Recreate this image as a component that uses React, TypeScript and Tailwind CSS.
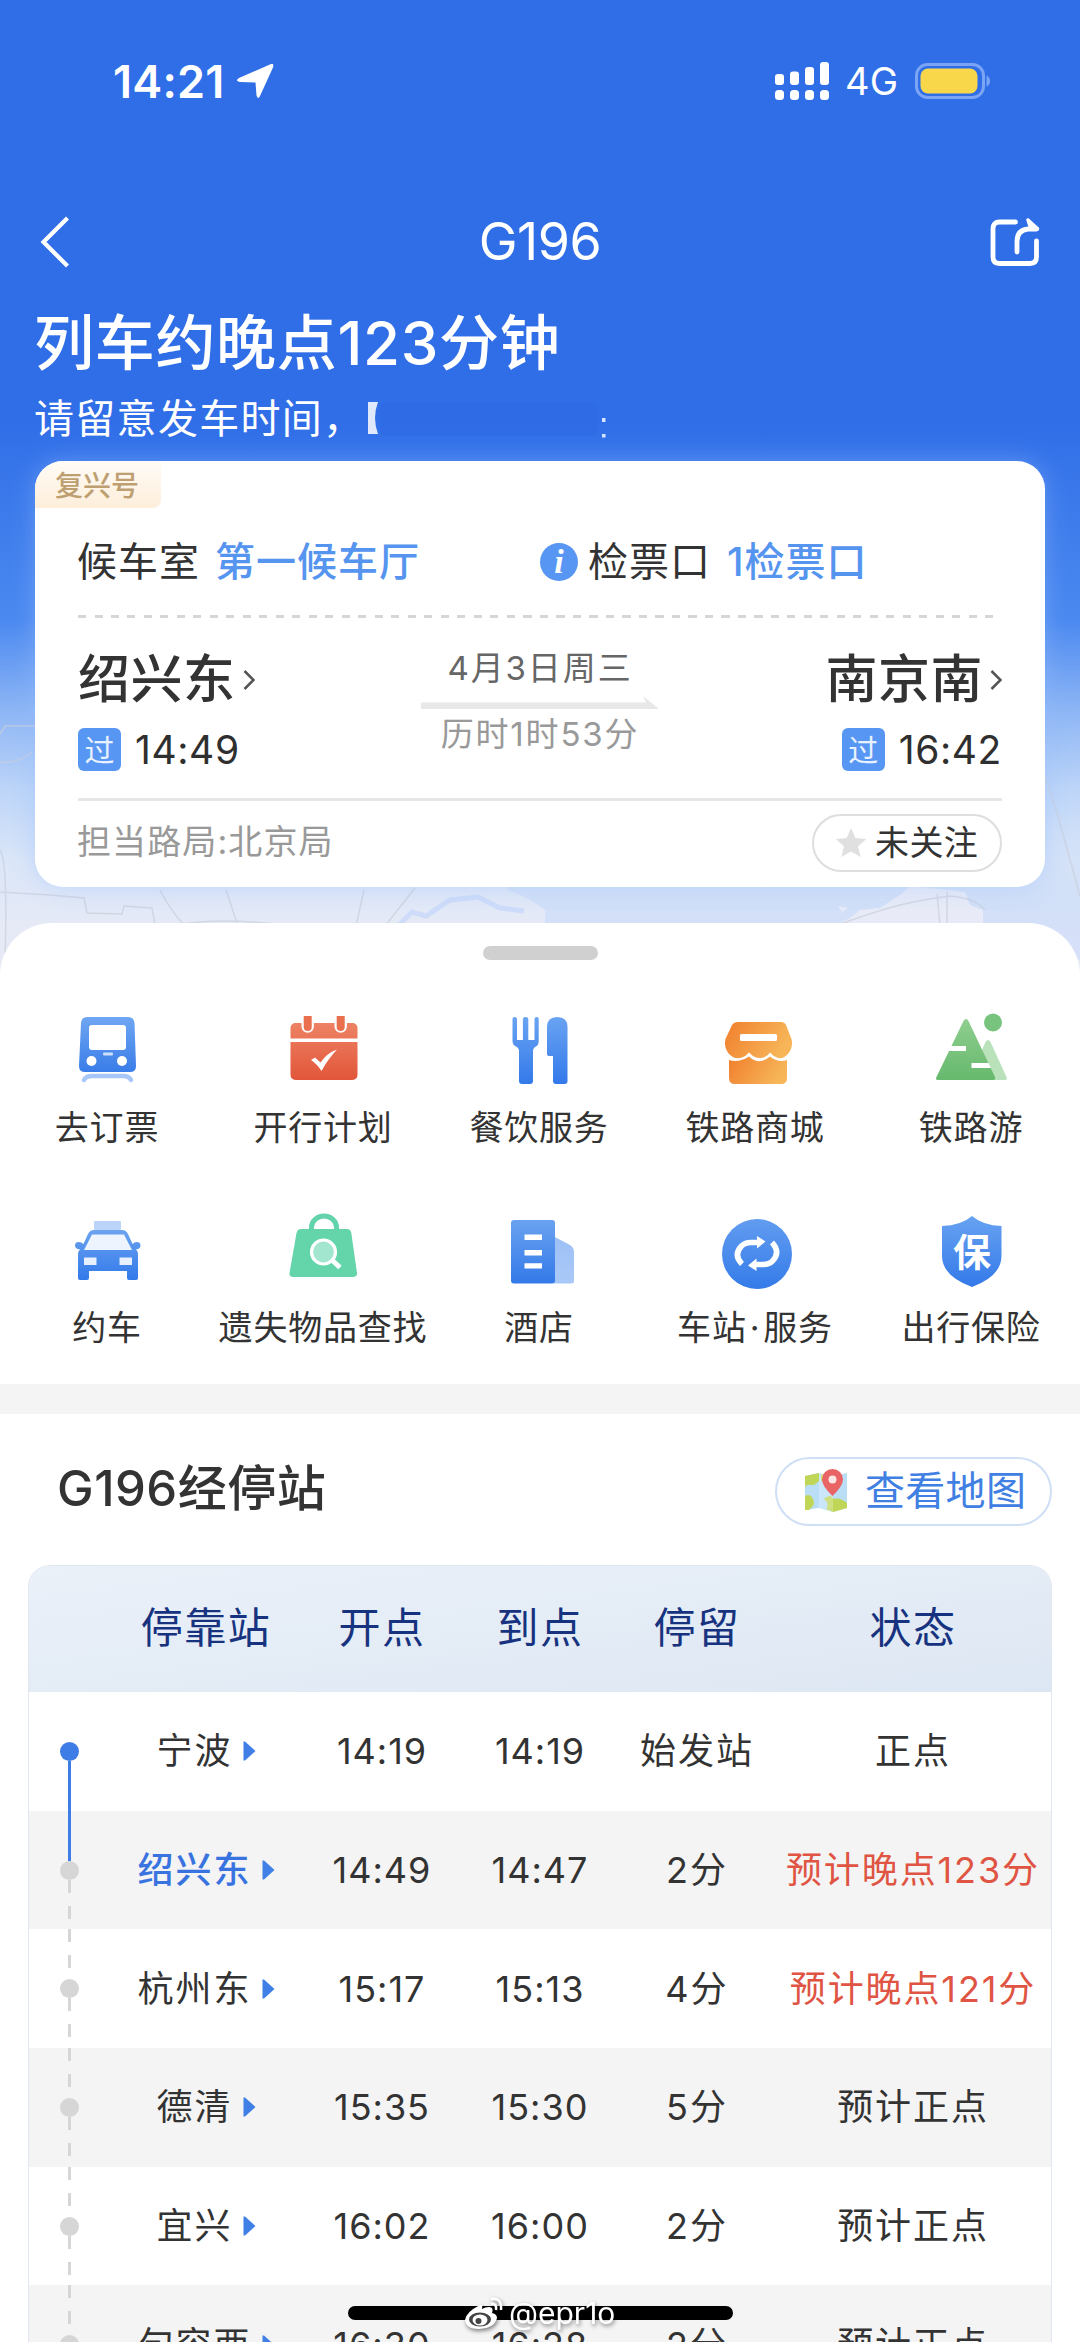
import type { ReactNode } from 'react';

type Stop = { name: string; dep: string; arr: string; stay: string; status: string; late?: boolean; current?: boolean };

const stops: Stop[] = [
  { name: '宁波', dep: '14:19', arr: '14:19', stay: '始发站', status: '正点' },
  { name: '绍兴东', dep: '14:49', arr: '14:47', stay: '2分', status: '预计晚点123分', late: true, current: true },
  { name: '杭州东', dep: '15:17', arr: '15:13', stay: '4分', status: '预计晚点121分', late: true },
  { name: '德清', dep: '15:35', arr: '15:30', stay: '5分', status: '预计正点' },
  { name: '宜兴', dep: '16:02', arr: '16:00', stay: '2分', status: '预计正点' },
  { name: '句容西', dep: '16:30', arr: '16:28', stay: '2分', status: '预计正点' },
];

const tableCols = 'grid grid-cols-[80px_194px_158px_158px_156px_1fr] items-center text-center';

function Gradient({ id, from, to, x2 = 0, y2 = 1 }: { id: string; from: string; to: string; x2?: number; y2?: number }) {
  return (
    <defs>
      <linearGradient id={id} x1="0" y1="0" x2={x2} y2={y2}>
        <stop offset="0" stopColor={from} />
        <stop offset="1" stopColor={to} />
      </linearGradient>
    </defs>
  );
}

function Icon({ children }: { children: ReactNode }) {
  return (
    <svg viewBox="0 0 80 80" className="block size-20" fill="none">
      {children}
    </svg>
  );
}

const services: { label: ReactNode; icon: ReactNode }[] = [
  {
    label: '去订票',
    icon: (
      <Icon>
        <Gradient id="g-train" from="#6ea6f2" to="#3a7de9" />
        <path d="M16 70Q18 66 24 66H55Q61 66 63 70" stroke="#a9c6f8" strokeWidth="4.500" strokeLinecap="round" />
        <path d="M19 7H60Q66 7 66.500 13L68 56Q68 62 62 62H17Q11 62 11 56L13 13Q13.500 7 19 7Z" fill="url(#g-train)" />
        <rect x="21" y="15" width="37" height="25" rx="3" fill="#fff" />
        <rect x="35" y="42.500" width="10" height="3" rx="1" fill="#cfe0fb" />
        <circle cx="23.500" cy="51" r="5" fill="#fff" />
        <circle cx="54" cy="51" r="5" fill="#fff" />
      </Icon>
    ),
  },
  {
    label: '开行计划',
    icon: (
      <Icon>
        <Gradient id="g-cal" from="#ee8264" to="#e2563a" />
        <rect x="6.500" y="13" width="67" height="57" rx="5" fill="url(#g-cal)" />
        <rect x="6" y="28.500" width="68" height="3.500" fill="#fff" />
        <path d="M17.500 5V16.500A6.200 6.200 0 0 0 29.900 16.500V5ZM50.500 5V16.500A6.200 6.200 0 0 0 62.900 16.500V5Z" fill="#fff" />
        <path d="M19.700 6H27.700V17A4 4 0 0 1 19.700 17ZM52.700 6H60.700V17A4 4 0 0 1 52.700 17Z" fill="#e96f4f" />
        <path d="M27 50L31 47.500L36.500 52.500Q43 43 53 39.500Q44 49 37.500 61Q33 54 27 50Z" fill="#fff" />
      </Icon>
    ),
  },
  {
    label: '餐饮服务',
    icon: (
      <Icon>
        <Gradient id="g-fork" from="#69a3f2" to="#3379ea" />
        <path
          d="M14.500 7Q12.500 7 12.500 9V31Q12.500 35 16 36.500Q19 38 19 41V71Q19 74 22 74H30Q33 74 33 71V41Q33 38 36 36.500Q38.700 35 38.700 31V9Q38.700 7 36.700 7Q34.500 7 34.500 9V30H28.300V9Q28.300 7 25.600 7Q22.900 7 22.900 9V30H17V9Q17 7 14.500 7Z"
          fill="url(#g-fork)"
        />
        <path d="M47 17Q47 7 57.300 7Q67.500 7 67.500 17V71Q67.500 74 64.500 74H56Q53 74 53 71V46H49Q47 46 47 44Z" fill="url(#g-fork)" />
      </Icon>
    ),
  },
  {
    label: '铁路商城',
    icon: (
      <Icon>
        <Gradient id="g-shop" from="#f07f2e" to="#f7b558" x2={1} y2={0.3} />
        <path
          d="M22 12H65Q68.500 12 70 15L75.500 29Q77.500 37 72 44Q66 50 61 47.500Q57 46 54 42.500Q50 48 44 48Q38 48 33 42.500Q30 46 26 47.500Q19 50 13 44Q7.500 37 9.500 29L16 15Q18 12 22 12Z"
          fill="url(#g-shop)"
        />
        <rect x="24" y="24" width="37" height="7" rx="1.500" fill="#fff" />
        <path d="M13 50Q23 53 33 46.500Q43 56 54 46.500Q62 53 71 50V68Q71 74 65 74H19Q13 74 13 68Z" fill="url(#g-shop)" />
      </Icon>
    ),
  },
  {
    label: '铁路游',
    icon: (
      <Icon>
        <Gradient id="g-hill" from="#8fce90" to="#66b96d" />
        <path d="M53.500 32Q56 28 58.500 32L74.500 67Q75.500 70 73 70H50V40Z" fill="#b9e2bb" />
        <path d="M31.500 11Q34 7 36.500 11L63 67Q64 70 61 70H6Q3 70 4.500 67Z" fill="url(#g-hill)" />
        <path d="M18.500 36H34V41H16ZM39.500 53H56.500L59 58H39.500Z" fill="#fff" />
        <circle cx="61" cy="12.500" r="9" fill="#78c37e" />
      </Icon>
    ),
  },
  {
    label: '约车',
    icon: (
      <Icon>
        <Gradient id="g-taxi" from="#6ba3f0" to="#3279ea" />
        <rect x="26" y="11" width="27" height="9" rx="1" fill="#bcd4f9" />
        <path
          d="M26 20H54Q58 20 60 24L64.500 34Q66 32 69 32Q72.500 32 72.500 35.500Q72.500 39 68 39.500Q70 41 70 45V68Q70 70 68 70H61Q59 70 59 68V61H21V68Q21 70 19 70H12Q10 70 10 68V45Q10 41 12 39.500Q7 39 7 35.500Q7 32 10.500 32Q13.500 32 15.500 34L20 24Q22 20 26 20Z"
          fill="url(#g-taxi)"
        />
        <path d="M24 24.500H56L64 40H16Z" fill="#eef4fe" />
        <path d="M16 47.500H28.500V55H16ZM51.500 47.500H64V55H51.500Z" fill="#e6f0fe" />
      </Icon>
    ),
  },
  {
    label: '遗失物品查找',
    icon: (
      <Icon>
        <path d="M27.500 22V17.500A12.500 11.500 0 0 1 52.500 17.500V22" stroke="#62d3ab" strokeWidth="5" />
        <path d="M17 19H63Q66.500 19 67.300 23L73 63Q73.300 67 69 67H9.500Q5 67 5.500 63L12.500 23Q13.500 19 17 19Z" fill="#64d4ab" />
        <circle cx="39.500" cy="42" r="12" fill="#a3e6cf" stroke="#fff" strokeWidth="3.200" />
        <path d="M48.500 50.500L56 57.500" stroke="#fff" strokeWidth="5" />
      </Icon>
    ),
  },
  {
    label: '酒店',
    icon: (
      <Icon>
        <Gradient id="g-hotel" from="#6aa2f0" to="#3379e9" />
        <Gradient id="g-annex" from="#9dc0f5" to="#a9c9f8" />
        <path d="M54 26.500L70 35Q74 37.500 74 42V71Q74 73.500 71 73.500H54Z" fill="url(#g-annex)" />
        <rect x="11" y="10" width="44" height="63.500" rx="3" fill="url(#g-hotel)" />
        <path d="M24.500 24.500H42V30H24.500ZM24.500 40H42V45.500H24.500ZM24.500 53.300H42V58.500H24.500Z" fill="#fff" />
      </Icon>
    ),
  },
  {
    label: (
      <>
        车站<span className="mx-[3px]">·</span>服务
      </>
    ),
    icon: (
      <Icon>
        <Gradient id="g-loop" from="#629cf0" to="#347be9" />
        <circle cx="41" cy="44" r="35" fill="url(#g-loop)" />
        <path d="M26 54Q17 45 25.500 36Q29 32.500 35 32.500H42M56 32.500Q65 42 56.500 51Q53 54.500 47 54.500H39" stroke="#fff" strokeWidth="5.500" />
        <path d="M41 26L49.500 31.500L41 38.500ZM40.500 48.500L32 55.500L40.500 61Z" fill="#fff" />
      </Icon>
    ),
  },
  {
    label: '出行保险',
    icon: (
      <Icon>
        <Gradient id="g-shield" from="#68a2f1" to="#3379e9" />
        <path d="M40 6Q51 15.500 69.500 16V46Q69.500 66 40 77Q10 66 10 46V16Q29 15.500 40 6Z" fill="url(#g-shield)" />
        <text x="40" y="56" textAnchor="middle" fontSize="38" fontWeight="700" fill="#fff">
          保
        </text>
      </Icon>
    ),
  },
];

function StatusBar() {
  return (
    <div className="flex h-[162px] items-center justify-between pl-[113px] pr-[89px]">
      <div className="flex items-center gap-[12px]">
        <span className="text-[45px] font-semibold leading-none tracking-[0.200px]">14:21</span>
        <svg viewBox="0 0 38 36" className="h-9 w-[38px]">
          <path d="M34.500 1.200Q38 -0.500 37.200 4L24 33Q22 37 20.500 32.500L19.500 19.500L4 19Q-1.500 18 3 15Z" fill="#fff" />
        </svg>
      </div>
      <div className="flex items-center">
        <svg viewBox="0 0 54 38" className="h-[38px] w-[54px]" fill="#fff">
          <rect x="0" y="12" width="9" height="11" rx="3" />
          <rect x="15" y="9.500" width="9" height="13.500" rx="3" />
          <rect x="30" y="5" width="9" height="18" rx="3" />
          <rect x="45" y="0" width="9" height="23" rx="3" />
          <rect x="0" y="28" width="9" height="10" rx="3.500" />
          <rect x="15" y="28" width="9" height="10" rx="3.500" />
          <rect x="30" y="28" width="9" height="10" rx="3.500" />
          <rect x="45" y="28" width="9" height="10" rx="3.500" />
        </svg>
        <span className="ml-4 text-[38px] leading-none">4G</span>
        <svg viewBox="0 0 76 36" className="ml-[17px] h-9 w-[76px]">
          <rect x="1.500" y="1.500" width="67" height="33" rx="11" fill="none" stroke="#7ba5f4" strokeWidth="3" />
          <rect x="5.500" y="5.500" width="57" height="25" rx="7.500" fill="#f8d74a" />
          <path d="M71.500 12.500Q75 14 75 18T71.500 23.500Z" fill="#7ba5f4" />
        </svg>
      </div>
    </div>
  );
}

function Header() {
  return (
    <div className="flex h-[160px] items-center justify-between pl-[40px] pr-[40px]">
      <svg viewBox="0 0 30 52" className="h-[52px] w-[30px]" fill="none" stroke="#fff" strokeWidth="4.200">
        <path d="M27.500 2L3.500 26L27.500 50" />
      </svg>
      <h1 className="pl-5 text-[52px] leading-none tracking-[-0.500px]">G196</h1>
      <svg viewBox="0 0 50 50" className="size-[50px]" fill="none" stroke="#fff" strokeWidth="4.800" strokeLinecap="round" strokeLinejoin="round">
        <path d="M25.500 5H9.500Q3 5 3 11.500V40Q3 46.500 9.500 46.500H40Q46.500 46.500 46.500 40V24" />
        <path d="M27 35V24.500Q27 13 38 12H46.500" />
        <path d="M38 3L47.500 11.800L41 12Z" fill="#fff" strokeWidth="3.500" />
      </svg>
    </div>
  );
}

function Chevron() {
  return (
    <svg viewBox="0 0 12 20" className="h-5 w-3" fill="none" stroke="#555" strokeWidth="2.500">
      <path d="M1.500 1L10.500 10L1.500 19" />
    </svg>
  );
}

function Station({ name, time, right }: { name: string; time: string; right?: boolean }) {
  return (
    <div className={right ? 'flex flex-col items-end' : 'flex flex-col items-start'}>
      <div className="flex h-[74px] items-center gap-[7px]">
        <span className="text-[52px] font-medium leading-none tracking-[0.500px] text-[#333]">{name}</span>
        <Chevron />
      </div>
      <div className="mt-[11px] flex items-center gap-[14px]">
        <span className="flex size-[43px] items-center justify-center rounded-[6px] bg-[#5796f2] text-[30px] leading-none text-[#e8f1ff]">过</span>
        <span className="text-[39px] leading-none tracking-[0.600px] text-[#2f2f2f]">{time}</span>
      </div>
    </div>
  );
}

function TrainCard() {
  return (
    <section className="mx-[35px] flex h-[426px] flex-col overflow-hidden rounded-[28px] bg-white shadow-[0_0_24px_rgba(150,190,255,0.45)]">
      <div className="flex h-[47px] w-[126px] items-center rounded-br-[8px] bg-gradient-to-b from-[#fffcf7] to-[#fdeeda] pl-[20px] pt-[2px] text-[28px] font-medium leading-none text-[#bd9f72]">复兴号</div>
      <div className="flex flex-col px-[43px]">
        <div className="-ml-px flex h-[107px] items-center text-[40px] leading-none tracking-[1px] text-[#333]">
          <span className="w-[138px]">候车室</span>
          <span className="w-[325px] font-medium text-[#5594ef]">第一候车厅</span>
          <span className="mr-[10px] flex size-[38px] items-center justify-center rounded-full bg-[#5796f2] pl-[1px] font-['Liberation_Serif'] text-[34px] font-bold italic text-white">i</span>
          <span className="w-[139px]">检票口</span>
          <span className="font-medium text-[#5594ef]">1检票口</span>
        </div>
        <div className="h-[3px] bg-[repeating-linear-gradient(90deg,#d6d6d6_0_8px,transparent_8px_16.500px)]" />
        <div className="mt-[25px] flex h-[155px] justify-between">
          <Station name="绍兴东" time="14:49" />
          <div className="flex w-[238px] flex-col items-center pt-[6px]">
            <span className="flex h-[38px] items-center text-[33px] leading-none tracking-[1.900px] text-[#666]">4月3日周三</span>
            <svg viewBox="0 0 238 13" className="mt-[9px] h-[13px] w-[238px]">
              <path d="M0 6.500H225L222 0L238 13H0Z" fill="#e8e8e8" />
            </svg>
            <span className="mt-[6px] flex h-[38px] items-center text-[33px] leading-none tracking-[1.800px] text-[#999]">历时1时53分</span>
          </div>
          <Station name="南京南" time="16:42" right />
        </div>
        <div className="h-[3px] bg-[#e6e6e6]" />
        <div className="flex h-[84px] items-center justify-between">
          <span className="-ml-px pb-[2px] text-[34px] leading-none tracking-[1.100px] text-[#999]">担当路局:北京局</span>
          <span className="flex h-[58px] w-[190px] items-center rounded-full border-2 border-[#dedede] pl-[21px] text-[34px] leading-none tracking-[0.400px] text-[#333]">
            <svg viewBox="0 0 24 24" className="mr-[8px] size-[32px]" fill="#e0e0e0">
              <path d="M12 0.800L15.300 8.200L23.500 9L17.300 14.500L19.200 22.500L12 18.300L4.800 22.500L6.700 14.500L0.500 9L8.700 8.200Z" />
            </svg>
            未关注
          </span>
        </div>
      </div>
    </section>
  );
}

function MapBackdrop() {
  return (
    <svg viewBox="0 0 1080 260" className="absolute left-0 top-[720px] h-[260px] w-[1080px]" fill="none" stroke="#c9cfdc" strokeWidth="1.500" strokeOpacity="0.700">
      <defs>
        <linearGradient id="water" x1="0" y1="0" x2="0" y2="1">
          <stop offset="0" stopColor="#c9dcf8" stopOpacity="0" />
          <stop offset="0.600" stopColor="#cdddf8" />
          <stop offset="1" stopColor="#d6defa" />
        </linearGradient>
      </defs>
      <path d="M508 100H1080V240H545V190Q530 178 508 170Z" fill="url(#water)" stroke="none" opacity="0.800" />
      <path d="M836 205L850 198L860 190L880 188L900 175L910 166L930 168L965 172L970 185L983 190L983 215H832Z" fill="#e8ebf7" stroke="none" />
      <path d="M838 186L848 188L842 192Z" fill="#e8ebf7" stroke="none" />
      <path d="M840 204Q880 190 900 185T950 176Q975 178 985 190M937 174L940 205M947 172V205" />
      <path d="M0 172L50 175L84 178L87 193L122 194L124 186L152 188L155 204M0 130Q8 140 5 240M160 170Q170 190 185 206M226 170L238 206M170 206Q220 196 290 206M415 168L385 206M364 170L356 206M0 14L5 6H35M0 42Q18 44 32 32" />
      <path d="M398 206L412 192L426 196L450 180L478 177L500 188L524 191" stroke="#c8d8fa" strokeWidth="5" strokeOpacity="0.800" />
      <path d="M1028 5L1058 96L1080 176" />
    </svg>
  );
}

function MapIcon() {
  return (
    <svg viewBox="0 0 44 44" className="size-11" fill="none">
      <path d="M1 7L15 4L29 7L43 4V39L29 43L15 39L1 41Z" fill="#b9def6" />
      <path d="M1 7L15 4V12Q10 17 7 16Q3 15 1 18ZM1 27Q6 24 9 30Q12 36 5 41L1 41ZM20 30Q26 24 30 30Q36 28 43 34V39L29 43L22 40Q26 35 20 30ZM17 5L22 6Q21 13 17 12Z" fill="#bfd657" />
      <path d="M15 4L29 7V43L15 39Z" fill="#fff" opacity="0.250" />
      <path d="M28.500 27Q18 17 18 10.500A10.500 10.500 0 0 1 39 10.500Q39 17 28.500 27Z" fill="#e96464" />
      <circle cx="28.500" cy="10.500" r="4" fill="#fbe6e4" />
    </svg>
  );
}

function Track({ index }: { index: number }) {
  const first = index === 0;
  const dash = 'bg-[repeating-linear-gradient(180deg,#d6d6d6_0_13px,transparent_13px_26px)]';
  return (
    <div className="flex h-full flex-col items-center">
      <div className={`w-[3px] flex-1 ${first ? '' : index === 1 ? 'bg-[#3f7de6]' : dash}`} />
      <div className={`size-[19px] rounded-full ${first ? 'bg-[#3f7de6]' : 'bg-[#d6d6d6]'}`} />
      <div className={`w-[3px] flex-1 ${first ? 'bg-[#3f7de6]' : dash}`} />
    </div>
  );
}

function StopsTable() {
  return (
    <div className="mx-[28px] mt-[39px] overflow-hidden rounded-t-[22px] border-x border-t border-[#e0e7f1]">
      <div className={`${tableCols} h-[126px] bg-gradient-to-br from-[#ebf1f9] to-[#dde7f3] pb-[2px] text-[42px] leading-none tracking-[1.500px] text-[#17337f]`}>
        <span />
        <span>停靠站</span>
        <span>开点</span>
        <span>到点</span>
        <span>停留</span>
        <span>状态</span>
      </div>
      {stops.map((s, i) => (
        <div key={s.name} className={`${tableCols} h-[118.700px] text-[36px] leading-none tracking-[1px] text-[#333] ${i % 2 ? 'bg-[#f4f4f4]' : 'bg-white'}`}>
          <Track index={i} />
          <div className="flex items-center justify-center gap-[10px]">
            <span className={`tracking-[2px] ${s.current ? 'font-medium text-[#3873df]' : ''}`}>{s.name}</span>
            <svg viewBox="0 0 13 20" className="h-5 w-[13px]">
              <path d="M0.500 0.500H2L12.500 10L2 19.500H0.500Z" fill="#3f7fe6" />
            </svg>
          </div>
          <span>{s.dep}</span>
          <span>{s.arr}</span>
          <span className="tracking-[2px]">{s.stay}</span>
          <span className={`whitespace-nowrap tracking-[1.900px] ${s.late ? 'text-[#df5443]' : ''}`}>{s.status}</span>
        </div>
      ))}
    </div>
  );
}

export default function App() {
  return (
    <main className="relative h-[2342px] w-[1080px] overflow-hidden bg-white font-['Inter','Noto_Sans_CJK_SC',sans-serif] text-white">
      <div className="relative h-[980px] bg-[linear-gradient(180deg,#306ee8_0px,#306ee8_420px,#3b79eb_500px,#4b89f0_620px,#8db5f5_710px,#bdd5f8_790px,#dbe6f8_860px,#e6eaf6_930px)]">
        <MapBackdrop />
        <div className="relative">
          <StatusBar />
          <Header />
          <div className="h-[139px] pl-[34px]">
            <h2 className="flex h-[42px] items-center text-[60px] font-medium leading-none tracking-[0.700px]">列车约晚点123分钟</h2>
            <div className="mt-[34px] flex h-[42px] items-center text-[40px] leading-none tracking-[1.300px]">
              <span>请留意发车时间，</span>
              <svg viewBox="0 0 242 42" className="h-[42px] w-[242px]">
                <path d="M4 4H14Q8 20 14 36H4Z" fill="#fff" opacity="0.850" />
                <rect x="16" y="4" width="218" height="34" rx="8" fill="#2b67e2" opacity="0.500" />
                <rect x="238" y="20" width="3.500" height="4" fill="#d6e4ff" />
                <rect x="238" y="36" width="3.500" height="3.500" fill="#d6e4ff" />
              </svg>
            </div>
          </div>
          <TrainCard />
        </div>
      </div>

      <div className="relative -mt-[57px] rounded-t-[52px] bg-white text-[#333]">
        <div className="flex h-[87px] justify-center pt-[23px]">
          <div className="h-[14px] w-[115px] rounded-full bg-[#d0d0d0]" />
        </div>
        <div className="grid h-[374px] grid-cols-5 grid-rows-[200px_174px]">
          {services.map((s, i) => (
            <div key={i} className="flex flex-col items-center">
              {s.icon}
              <span className="mt-[21px] whitespace-nowrap pr-[2px] text-[34px] leading-none tracking-[0.800px]">{s.label}</span>
            </div>
          ))}
        </div>
        <div className="h-[30px] bg-[#f4f4f4]" />
        <div className="mt-[43px] flex h-[69px] items-center justify-between pl-[57px] pr-[28px]">
          <h3 className="pb-[7px] text-[49px] font-medium leading-none tracking-[0.500px]">G196经停站</h3>
          <div className="flex h-[69px] w-[277px] items-center rounded-full border-2 border-[#cfdff5] pb-px pl-[27px] text-[40px] leading-none tracking-[0.300px] text-[#4080e2]">
            <MapIcon />
            <span className="ml-[17px]">查看地图</span>
          </div>
        </div>
        <StopsTable />
      </div>

      <div className="absolute left-[348px] top-[2306px] h-[14px] w-[385px] rounded-full bg-black" />
      <div className="absolute left-[464px] top-[2296px] flex items-center gap-[5px] text-white [filter:drop-shadow(1px_2px_2px_rgba(0,0,0,0.500))]">
        <svg viewBox="0 0 40 34" className="h-[34px] w-10">
          <path d="M16 9Q2 16 1 24Q2 33 15 33Q31 32 33 22Q33 18 28 17Q30 11 25 11Q21 11 18 13Q19 8 16 9Z" fill="#fff" />
          <path d="M27 3Q38 1 37 14M27 8Q33 7 32 14" fill="none" stroke="#fff" strokeWidth="2.500" />
          <ellipse cx="16" cy="23.500" rx="11" ry="7" fill="#444" />
          <ellipse cx="16" cy="24" rx="7.500" ry="5.500" fill="#fff" />
          <circle cx="14.500" cy="25" r="3" fill="#444" />
        </svg>
        <span className="text-[30px] leading-none">@epr1o</span>
      </div>
    </main>
  );
}
